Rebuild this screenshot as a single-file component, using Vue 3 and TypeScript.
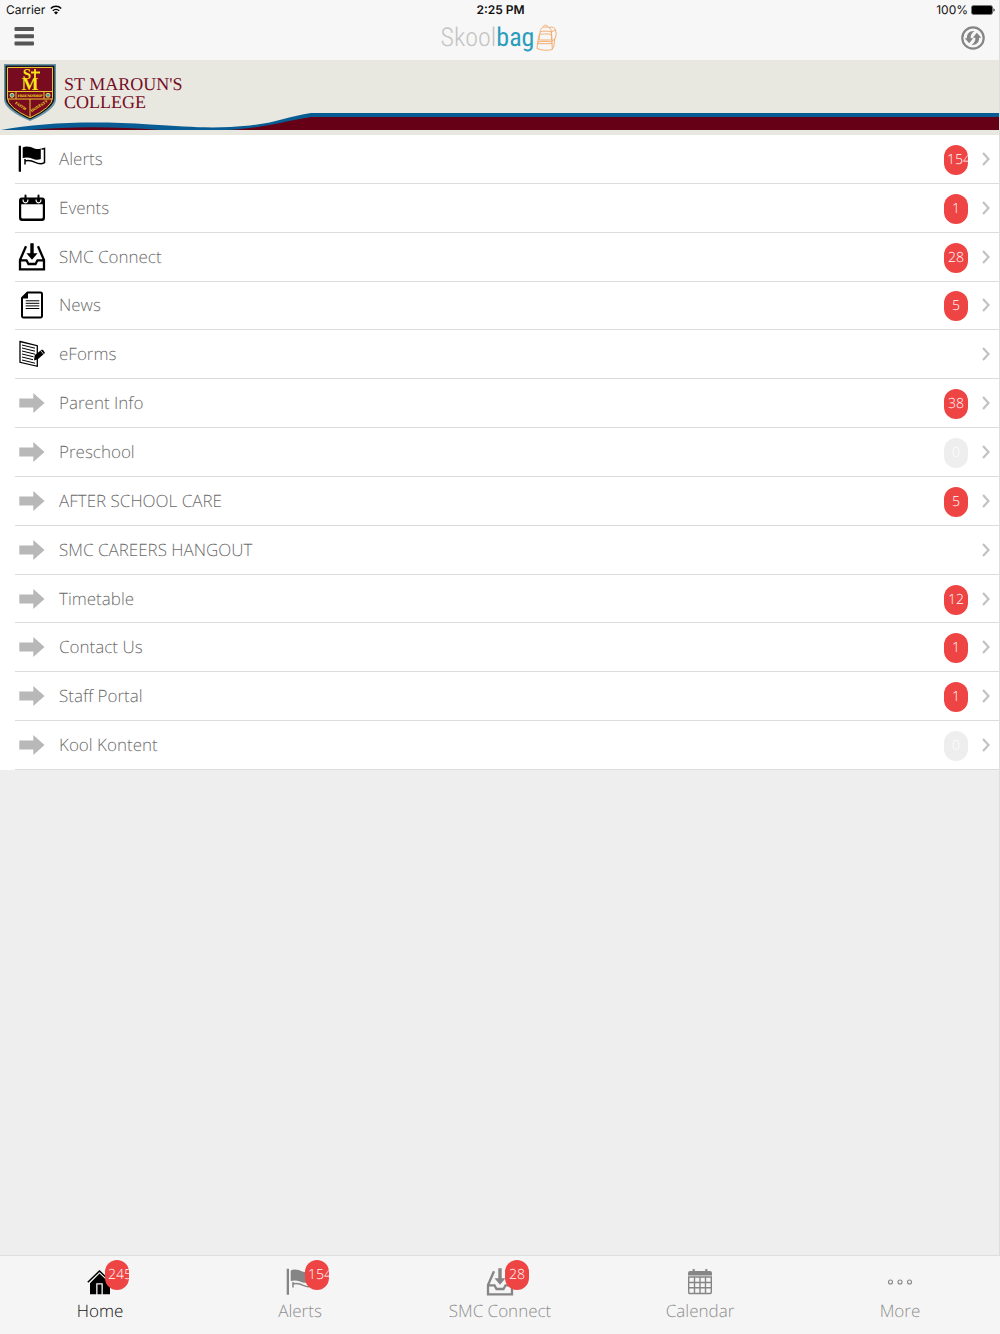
<script setup lang="ts">
interface MenuItem {
  label: string
  icon: string
  count?: number
}

const menu: MenuItem[] = [
  { label: 'Alerts', icon: 'flag', count: 154 },
  { label: 'Events', icon: 'events', count: 1 },
  { label: 'SMC Connect', icon: 'inbox', count: 28 },
  { label: 'News', icon: 'news', count: 5 },
  { label: 'eForms', icon: 'form' },
  { label: 'Parent Info', icon: 'arrow', count: 38 },
  { label: 'Preschool', icon: 'arrow', count: 0 },
  { label: 'AFTER SCHOOL CARE', icon: 'arrow', count: 5 },
  { label: 'SMC CAREERS HANGOUT', icon: 'arrow' },
  { label: 'Timetable', icon: 'arrow', count: 12 },
  { label: 'Contact Us', icon: 'arrow', count: 1 },
  { label: 'Staff Portal', icon: 'arrow', count: 1 },
  { label: 'Kool Kontent', icon: 'arrow', count: 0 },
]

const tabs: MenuItem[] = [
  { label: 'Home', icon: 'home', count: 245 },
  { label: 'Alerts', icon: 'flag', count: 154 },
  { label: 'SMC Connect', icon: 'inbox', count: 28 },
  { label: 'Calendar', icon: 'calendar' },
  { label: 'More', icon: 'more' },
]
</script>

<template>
  <div class="app">
    <svg class="sprite" aria-hidden="true">
      <symbol id="flag" viewBox="0 0 28 28">
        <path fill="currentColor" d="M.7.700h2.300v26H.7zM4.700 2.400C9 .5 13 2.200 16.400 3.400c2.400.8 4.300.7 6.400 0V14c-3 1.200-5.800.6-9-.6-3.200-1.200-6-1.400-9.100-.3z" />
        <path fill="none" stroke="currentColor" stroke-width="1.500" d="M23.500 4.300l3-.9v14.200c-2.800 1.600-6 1.300-9.200-.2-3.400-1.700-6.500-2.200-10.300-1.500V14M7 16v3.500" />
      </symbol>
      <symbol id="events" viewBox="0 0 28 28">
        <path fill="currentColor" fill-rule="evenodd" d="M4 3.500h20a3 3 0 0 1 3 3V24a3 3 0 0 1-3 3H4a3 3 0 0 1-3-3V6.500a3 3 0 0 1 3-3zM3.200 10.300V23a1.500 1.500 0 0 0 1.500 1.500h18.600a1.500 1.500 0 0 0 1.500-1.500V10.300z" />
        <path fill="none" stroke="#fff" stroke-width="1.200" d="M5.300 5.500a2.400 2.400 0 1 0 4.400 0M18.300 5.500a2.400 2.400 0 1 0 4.400 0" />
        <path stroke="currentColor" stroke-width="2" stroke-linecap="round" d="M7.500 1.500v5M20.500 1.500v5" />
      </symbol>
      <symbol id="inbox" viewBox="0 0 28 28">
        <path fill="currentColor" d="M12.300.3h3.400v10h3.800L14 16.700l-5.500-6.400h3.800z" />
        <path fill="none" stroke="currentColor" stroke-width="2.300" d="M8 3.300L2 17v9.300h24V17L20 3.300M2 17.300h6.500l2 3.700h7l2-3.700H26" />
      </symbol>
      <symbol id="news" viewBox="0 0 28 28">
        <path fill="none" stroke="currentColor" stroke-width="2" stroke-linejoin="round" d="M9.500 1.500h13a1.500 1.500 0 0 1 1.500 1.500v22a1.500 1.500 0 0 1-1.500 1.500h-17A1.500 1.500 0 0 1 4 25V7z" />
        <path fill="currentColor" d="M10 1v6.500H3.500z" />
        <path stroke="currentColor" d="M7.700 9.800h13.600M7.700 12.300h13.600M7.700 14.900h13.600M7.700 17.500h13.600" />
      </symbol>
      <symbol id="form" viewBox="0 0 28 28">
        <path fill="none" stroke="currentColor" stroke-width="1.300" d="M2 1.500l17.300 4.200v20.600L2 22.300z" />
        <path stroke="currentColor" d="M4 5l13 3.200M4 8l13 3.200M4 11l13 3.200M4 14l11.500 2.800M4 17l11 2.700M4 20l13 3.200" />
        <path fill="currentColor" d="M16 20.500l.8-5.500 7.200-5.500q1.500 0 3 3.500l-7.200 6.200z" />
        <path stroke="#fff" stroke-width=".8" d="M22.700 10.500l3 3.800" />
      </symbol>
      <symbol id="arrow" viewBox="0 0 28 28">
        <path fill="#b8b8b8" d="M1.300 9.500h14V4l11.200 10-11.200 10v-5.500h-14z" />
      </symbol>
      <symbol id="home" viewBox="0 0 28 28">
        <path fill="none" stroke="currentColor" stroke-width="1.500" d="M1.800 14.300L13.500 3l11.700 11.300" />
        <path fill="currentColor" d="M20 4h3.500v7L20 8z" />
        <path fill="currentColor" fill-rule="evenodd" d="M13.500 5.500L24 15.500v10.700H4V15.200zM10.200 15.300v10.900h1.300v-9.600h4v9.600h1.300V15.300z" />
      </symbol>
      <symbol id="calendar" viewBox="0 0 28 28">
        <path fill="currentColor" d="M4 3h20a2 2 0 0 1 2 2v2.500H2V5a2 2 0 0 1 2-2zM6.700 1h2v3h-2zM19.300 1h2v3h-2z" />
        <path fill="none" stroke="currentColor" stroke-width="1.400" d="M2.700 9h22.600v15.500a1 1 0 0 1-1 1H3.700a1 1 0 0 1-1-1zM2.700 14.500h22.600M2.700 19.700h22.600M8.500 9v16.500M14 9v16.500M19.500 9v16.500" />
      </symbol>
      <symbol id="more" viewBox="0 0 28 28">
        <g fill="none" stroke="currentColor" stroke-width="1.100">
          <circle cx="4.500" cy="14" r="2" /><circle cx="14" cy="14" r="2" /><circle cx="23.500" cy="14" r="2" />
        </g>
      </symbol>
    </svg>

    <header class="top">
      <div class="status">
        <span class="carrier">
          Carrier
          <svg width="12" height="10" viewBox="0 0 12 10" aria-hidden="true">
            <path fill="none" stroke="#000" stroke-width="1.500" d="M.8 3.500a7.400 7.400 0 0 1 10.400 0M2.800 5.800a4.600 4.600 0 0 1 6.400 0" />
            <path d="M6 9.500L4 7.400a2.800 2.800 0 0 1 4 0z" />
          </svg>
        </span>
        <span class="time">2:25 PM</span>
        <span class="battery">
          100%
          <svg width="24" height="10" viewBox="0 0 24 10" aria-hidden="true">
            <rect x=".5" y=".5" width="21" height="9" rx="2" fill="#000" stroke="#777" />
            <path d="M22.500 3.200a2 2 0 0 1 0 3.600z" />
          </svg>
        </span>
      </div>
      <div class="nav">
        <button class="icon-button" type="button" aria-label="Menu">
          <svg width="20" height="22" viewBox="0 0 20 22" fill="#555">
            <rect x=".500" width="19.500" height="4" rx="1" /><rect x=".500" y="7.300" width="19.500" height="4" rx="1" /><rect x=".500" y="14.600" width="19.500" height="4" rx="1" />
          </svg>
        </button>
        <div class="brand">
          <span class="skool">Skool</span><span class="bag">bag</span>
          <svg width="24" height="28" viewBox="0 0 24 28" fill="none" stroke="#f2a765" stroke-width=".9" aria-hidden="true">
            <path d="M6 9c0-4 2-6 6-6s5 2 5.500 5l.8 17.500c-5 1.300-10 1-15.300-1L4.500 13zM9 3.200c0-2.700 5-2.700 5 0M15 3.500c4-1 6 0 6.500 2.500l.8 4-1.800 6-.5 6-1.800 3M17.500 8l3.500-2M18 17l3-2" />
            <path d="M5.500 10.500c4-.8 8-.8 12 0l.3 5.500H5zM3.500 18c5-.8 10-.8 14.800 0M3.200 19.700h15M6 8c3-1.200 8-1.200 11.500 0" />
          </svg>
        </div>
        <button class="icon-button" type="button" aria-label="Refresh">
          <svg width="24" height="24" viewBox="0 0 24 24" fill="#858585">
            <circle cx="12" cy="12" r="10.700" fill="none" stroke="#858585" stroke-width="2.200" />
            <path id="refresh-arrow" d="M13.500 5C8.500 4.600 5.800 7.500 5.900 12.200H3.700l4.500 5 4-5H9.600c-.1-3 1.200-5.500 3.900-7.200z" />
            <path d="M10.500 19c5 .4 7.700-2.500 7.600-7.200h2.200l-4.500-5-4 5h2.600c.1 3-1.200 5.500-3.900 7.200z" />
          </svg>
        </button>
      </div>
    </header>

    <main class="content">
      <section class="banner">
        <div class="school">
          <svg width="52" height="58" viewBox="0 0 52 58" role="img" aria-label="School crest">
            <path fill="#6793a4" d="M0 0h52v35q0 11-26 22Q0 46 0 35z" />
            <path fill="#171522" d="M1.500 1.500h49V34q0 10-24.500 21.500Q1.500 44 1.500 34z" />
            <path fill="#780b20" stroke="#e9c72c" d="M3.500 3.500h45v30.300q0 9.400-22.500 20Q3.500 43.200 3.500 33.800z" />
            <path stroke="#e9c72c" fill="none" d="M3.500 27.500h45M3.500 35h45M12 27.500V35M40 27.500V35M26 35v18" />
            <g fill="#3a9ab0" stroke="#e3d75c"><circle cx="8" cy="31.300" r="2" /><circle cx="44" cy="31.300" r="2" /></g>
            <g fill="#fae619" text-anchor="middle" font-family="Liberation Serif, serif" font-weight="700">
              <text x="23" y="15" font-size="15">S</text>
              <text x="26" y="26" font-size="18">M</text>
              <text x="26" y="33" font-size="4">FRIENDSHIP</text>
              <text x="16" y="43" font-size="4" transform="rotate(32 16 43)">FAITH</text>
              <text x="36" y="43" font-size="4" transform="rotate(-32 36 43)">HONESTY</text>
            </g>
            <path stroke="#fae619" stroke-width="1.800" d="M31 5v10M27 8.500h9" />
          </svg>
          <h1>ST MAROUN'S<br>COLLEGE</h1>
        </div>
        <div class="ribbon">
          <svg width="311" height="18" viewBox="0 0 311 18" aria-hidden="true">
            <path fill="#075d93" d="M1 18C40 11 90 8.500 150 12.500C190 15 215 17 250 13.500C275 11 290 4 311 1V18z" />
            <path fill="#660016" d="M30 18Q90 12.500 160 18zM228 18C265 16 285 9 311 5V18z" />
          </svg>
          <div class="ribbon-bar"></div>
        </div>
      </section>

      <ul class="menu">
        <li v-for="item in menu" :key="item.label">
          <a href="#">
            <svg class="icon" aria-hidden="true"><use :href="'#' + item.icon" /></svg>
            <span class="label">{{ item.label }}</span>
            <span v-if="item.count !== undefined" class="badge" :class="{ empty: item.count === 0 }">{{ item.count }}</span>
            <svg class="chevron" width="8" height="14" viewBox="0 0 8 14" aria-hidden="true">
              <path d="M1 1l5.500 6L1 13" fill="none" stroke="#c2c2c2" stroke-width="2.200" />
            </svg>
          </a>
        </li>
      </ul>
    </main>

    <nav class="tabs">
      <a v-for="(tab, index) in tabs" :key="tab.label" href="#" :class="{ active: index === 0 }">
        <span class="tab-icon">
          <svg class="icon" aria-hidden="true"><use :href="'#' + tab.icon" /></svg>
          <span v-if="tab.count" class="badge">{{ tab.count }}</span>
        </span>
        <span>{{ tab.label }}</span>
      </a>
    </nav>
  </div>
</template>

<style>
body {
  margin: 0;
  background: #eee;
}
</style>

<style scoped>
.app {
  display: flex;
  flex-direction: column;
  min-height: 100vh;
  font-family: "Open Sans", sans-serif;
  font-weight: 300;
  font-size: 17px;
  line-height: 24px;
  text-rendering: geometricPrecision;
  background: #eee;
}
.app * {
  box-sizing: border-box;
}
.sprite {
  position: absolute;
  width: 0;
  height: 0;
}
a {
  color: inherit;
  text-decoration: none;
}
.top {
  background: #f7f7f7;
  border-right: 1px solid #dedede;
}
.status {
  display: grid;
  grid-template-columns: 1fr auto 1fr;
  padding: 0 4px 0 6px;
  font: 400 12px/20px Inter, sans-serif;
  color: #111;
}
.carrier,
.battery {
  display: flex;
  align-items: center;
  gap: 5px;
}
.battery {
  justify-content: flex-end;
  gap: 3px;
}
.time {
  font-weight: 600;
}
.nav {
  display: grid;
  grid-template-columns: 1fr auto 1fr;
  align-items: center;
  height: 40px;
  padding: 0 14px 4px;
}
.icon-button {
  display: flex;
  padding: 0;
  border: 0;
  background: none;
}
.icon-button:last-child {
  justify-self: end;
}
.brand {
  display: flex;
  align-items: center;
  font: 400 26px/36px "Liberation Sans Narrow", "Roboto Condensed", Roboto, sans-serif;
}
.skool {
  font-weight: 300;
  color: #c4c4c4;
}
.bag {
  color: #2a9dbd;
}
.content {
  flex: 1;
  border-right: 1px solid #dedede;
}
.banner {
  display: flex;
  flex-direction: column;
  justify-content: space-between;
  height: 75px;
  padding-bottom: 5px;
  background: #e8e7e0;
}
.school {
  display: flex;
  gap: 8px;
  height: 52px;
  padding: 4px 0 0 4px;
}
.school svg {
  flex: none;
}
h1 {
  margin: 11px 0 0;
  font: 400 18px/18px "Liberation Serif", serif;
  color: #760d26;
}
.ribbon {
  display: flex;
}
.ribbon svg {
  flex: none;
}
.ribbon-bar {
  flex: 1;
  height: 17px;
  margin-top: 1px;
  border-top: 4px solid #075d93;
  background: #660016;
}
.menu {
  display: grid;
  grid-auto-rows: 1fr;
  min-height: 635px;
  margin: 0;
  padding: 0 0 0 15px;
  list-style: none;
  background: #fff;
}
.menu li {
  display: grid;
  border-bottom: 1px solid #dcdcdc;
}
.menu a {
  display: flex;
  align-items: center;
  padding: 0 9px 0 3px;
  color: #6b6b6b;
}
.icon {
  flex: none;
  width: 28px;
  height: 28px;
  color: #000;
}
.label {
  flex: 1;
  margin-left: 13px;
}
.badge {
  width: 24px;
  height: 30px;
  padding: 0 3px;
  overflow: hidden;
  border-radius: 12px;
  background: #ef4444;
  color: #fff;
  font-size: 14px;
  line-height: 30px;
  text-align: center;
  white-space: nowrap;
}
.menu .badge {
  margin-top: 2px;
}
.badge.empty {
  background: #eee;
}
.chevron {
  margin-left: 14px;
}
.tabs {
  display: grid;
  grid-template-columns: repeat(5, 1fr);
  height: 79px;
  border-top: 1px solid #dedede;
  background: #f5f5f5;
}
.tabs a {
  display: flex;
  flex-direction: column;
  align-items: center;
  gap: 3px;
  padding-top: 12px;
  color: #8e8e8e;
}
.tabs .active {
  color: #111;
}
.tab-icon {
  position: relative;
  height: 28px;
}
.tab-icon .icon {
  color: #858585;
}
.active .tab-icon .icon {
  color: #000;
}
.tab-icon .badge {
  position: absolute;
  top: -8px;
  left: 19px;
}
</style>
